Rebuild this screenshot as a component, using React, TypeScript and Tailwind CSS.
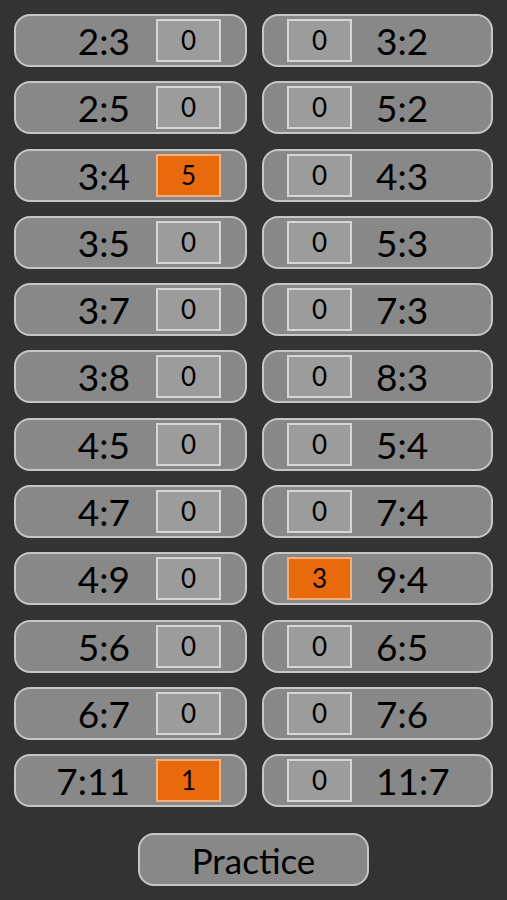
import React from "react";

const left: [string, string, boolean][] = [
  ["2:3", "0", false],
  ["2:5", "0", false],
  ["3:4", "5", true],
  ["3:5", "0", false],
  ["3:7", "0", false],
  ["3:8", "0", false],
  ["4:5", "0", false],
  ["4:7", "0", false],
  ["4:9", "0", false],
  ["5:6", "0", false],
  ["6:7", "0", false],
  ["7:11", "1", true],
];
const right: [string, string, boolean][] = [
  ["3:2", "0", false],
  ["5:2", "0", false],
  ["4:3", "0", false],
  ["5:3", "0", false],
  ["7:3", "0", false],
  ["8:3", "0", false],
  ["5:4", "0", false],
  ["7:4", "0", false],
  ["9:4", "3", true],
  ["6:5", "0", false],
  ["7:6", "0", false],
  ["11:7", "0", false],
];

const font = { fontFamily: "Lato, 'Open Sans', sans-serif" };

function Box({ v, hi }: { v: string; hi: boolean }) {
  return (
    <div
      className={
        "w-[65px] h-[43px] flex items-center justify-center text-[26px] text-black border-2 " +
        (hi ? "bg-[#e86a0c] border-[#f2ae7c]" : "bg-[#9c9c9c] border-[#d6d6d6]")
      }
    >
      {v}
    </div>
  );
}

export default function App() {
  return (
    <div className="w-[507px] h-[900px] bg-[#333333] pt-[14px] pl-[14px]" style={font}>
      <div className="grid grid-cols-[233px_231px] gap-x-[15px] gap-y-[14.3px]">
        {left.map((l, i) => {
          const r = right[i];
          return (
            <React.Fragment key={i}>
              <div className="h-[53px] rounded-[16px] bg-[#888888] border-2 border-[#c6c6c6] flex items-center justify-end pr-[24px] gap-[26px]">
                <span className="text-[37px] text-black leading-none">{l[0]}</span>
                <Box v={l[1]} hi={l[2]} />
              </div>
              <div className="h-[53px] rounded-[16px] bg-[#888888] border-2 border-[#c6c6c6] flex items-center justify-start pl-[23px] gap-[24px]">
                <Box v={r[1]} hi={r[2]} />
                <span className="text-[37px] text-black leading-none">{r[0]}</span>
              </div>
            </React.Fragment>
          );
        })}
      </div>
      <div className="flex justify-start pl-[124px] mt-[26px]">
        <div className="w-[231px] h-[53px] rounded-[16px] bg-[#888888] border-2 border-[#c6c6c6] flex items-center justify-center text-[35px] text-black">
          Practice
        </div>
      </div>
    </div>
  );
}
